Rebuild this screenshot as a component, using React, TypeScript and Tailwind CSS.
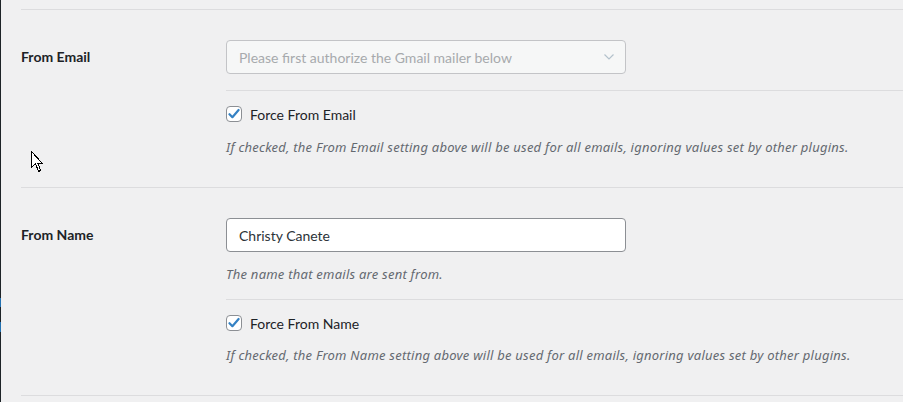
import React from "react";

const font = { fontFamily: 'Lato, "Noto Sans", sans-serif' };
const italicFont = { fontFamily: '"Noto Sans", "Open Sans", sans-serif' };

function Checkbox() {
  return (
    <span className="flex h-4 w-4 shrink-0 items-center justify-center rounded-[4px] border border-[#8c8f94] bg-white">
      <svg width="12" height="12" viewBox="0 0 12 12">
        <path d="M1.5 6.2 L4.4 9.2 L10.6 2" fill="none" stroke="#3582c4" strokeWidth="2.2" strokeLinecap="round" strokeLinejoin="round" />
      </svg>
    </span>
  );
}

function Cursor() {
  return (
    <svg
      className="absolute left-[31px] top-[151px]"
      width="13"
      height="22"
      viewBox="0 0 13 22"
      shapeRendering="crispEdges"
    >
      <path
        d="M0.5 0.5 L0.5 16.5 L4.5 12.5 L7.5 20.5 L9.5 19.5 L7 12.5 L11.5 12.5 Z"
        fill="#ffffff"
        stroke="#000000"
        strokeWidth="1"
        strokeLinejoin="miter"
      />
    </svg>
  );
}

export default function App() {
  return (
    <div className="relative flex h-[402px] w-[903px] overflow-hidden bg-[#f0f0f1]" style={font}>
      <div className="flex w-[1px] shrink-0 flex-col">
        <div className="h-[298px] bg-[#1d2327]" />
        <div className="h-[9px] bg-[#2271b1]" />
        <div className="h-[15px] bg-[#1d2327]" />
        <div className="h-[10px] bg-[#2271b1]" />
        <div className="flex-1 bg-[#1d2327]" />
      </div>
      <div className="flex-1 pl-[20px] pt-[9px]">
        {/* From Email */}
        <div className="flex border-t border-[#dcdcde]">
          <div className="w-[205px] shrink-0 pt-[37px] text-[14px] font-bold leading-5 text-[#1d2327]">
            From Email
          </div>
          <div className="flex-1">
            <div className="pb-[16px] pt-[30px]">
              <div className="flex h-[34px] w-[400px] items-center justify-between rounded-[4px] border border-[#c3c4c7] bg-[#f6f7f7] pl-[12px] pr-[10px] text-[14px] text-[#a7aaad]">
                <span>Please first authorize the Gmail mailer below</span>
                <svg width="12" height="8" viewBox="0 0 12 8">
                  <path d="M1.5 1.5 L6 6 L10.5 1.5" fill="none" stroke="#b4c2cc" strokeWidth="1.2" />
                </svg>
              </div>
            </div>
            <div className="border-t border-[#dcdcde] pb-[30px] pt-[15px]">
              <div className="flex h-4 items-center gap-[8px] text-[14px] text-[#1d2327]">
                <Checkbox />
                <span>Force From Email</span>
              </div>
              <p className="mt-[15px] text-[13px] italic leading-5 tracking-[0.24px] text-[#646970]" style={italicFont}>
                If checked, the From Email setting above will be used for all emails, ignoring values set by other plugins.
              </p>
            </div>
          </div>
        </div>

        {/* From Name */}
        <div className="flex border-t border-[#dcdcde]">
          <div className="w-[205px] shrink-0 pt-[37px] text-[14px] font-bold leading-5 text-[#1d2327]">
            From Name
          </div>
          <div className="flex-1">
            <div className="pb-[15px] pt-[30px]">
              <div className="flex h-[34px] w-[400px] items-center rounded-[4px] border border-[#8c8f94] bg-white pl-[12px] text-[14px] text-[#2c3338]">
                Christy Canete
              </div>
              <p className="mt-[12px] text-[13px] italic leading-5 tracking-[0.24px] text-[#646970]" style={italicFont}>
                The name that emails are sent from.
              </p>
            </div>
            <div className="border-t border-[#dcdcde] pb-[30px] pt-[15px]">
              <div className="flex h-4 items-center gap-[8px] text-[14px] text-[#1d2327]">
                <Checkbox />
                <span>Force From Name</span>
              </div>
              <p className="mt-[14px] text-[13px] italic leading-5 tracking-[0.24px] text-[#646970]" style={italicFont}>
                If checked, the From Name setting above will be used for all emails, ignoring values set by other plugins.
              </p>
            </div>
          </div>
        </div>
        <div className="border-t border-[#dcdcde]" />
      </div>
      <Cursor />
    </div>
  );
}
